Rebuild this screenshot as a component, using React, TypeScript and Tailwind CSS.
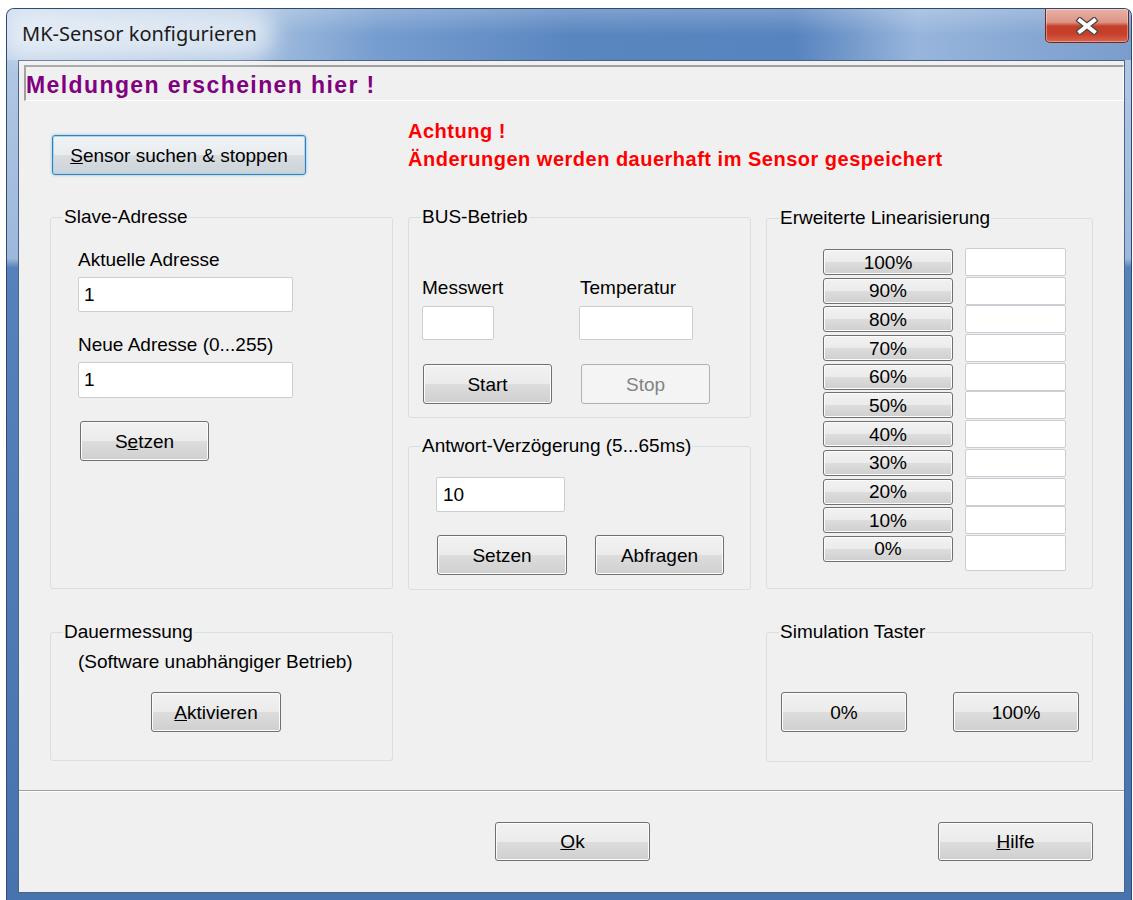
import type { ReactNode } from "react";

type ButtonProps = {
  children: ReactNode;
  className?: string;
  disabled?: boolean;
  focused?: boolean;
};

// Classic Win7 push button with the split gradient face
function WinButton({ children, className = "", disabled = false, focused = false }: ButtonProps) {
  let look =
    "border-[#707070] bg-[linear-gradient(180deg,#f2f2f2_0%,#ebebeb_50%,#dddddd_50%,#cfcfcf_100%)] shadow-[inset_0_0_0_1px_#fcfcfc] text-black";
  if (focused) {
    look =
      "border-[#3c7fb1] bg-[linear-gradient(180deg,#f1f4f6_0%,#e8ecef_50%,#d8dee2_50%,#ccd3d8_100%)] shadow-[inset_0_0_0_1px_#a6d6f1,0_0_3px_#7fbce6] text-black";
  }
  if (disabled) {
    look = "border-[#adb2b5] bg-[#f4f4f4] text-[#838383]";
  }
  return (
    <button
      type="button"
      disabled={disabled}
      className={`flex shrink-0 items-center justify-center rounded-[3px] border leading-none ${look} ${className}`}
    >
      {children}
    </button>
  );
}

function TextField({ value = "", className = "" }: { value?: string; className?: string }) {
  return (
    <input
      type="text"
      defaultValue={value}
      className={`block shrink-0 rounded-[2px] border border-[#c9ced4] bg-white pl-[5px] text-[19px] text-black outline-none ${className}`}
    />
  );
}

// Group frame; the caption sits on the top edge
function GroupBox({
  title,
  className = "",
  children,
}: {
  title: string;
  className?: string;
  children?: ReactNode;
}) {
  return (
    <div className={`relative shrink-0 rounded-[3px] border border-[#d5dfe5] pt-[9px] ${className}`}>
      <span className="absolute -top-[11px] left-[12px] bg-[#f0f0f0] px-[1px] leading-[20px] whitespace-nowrap">
        {title}
      </span>
      {children}
    </div>
  );
}

function CloseButton() {
  return (
    <div className="mr-[2px] flex h-[34px] w-[84px] items-center justify-center rounded-b-[5px] border border-t-0 border-[#6e2a20] bg-[linear-gradient(180deg,#e9b0a6_0%,#dc9486_40%,#c4402b_52%,#c53f2a_75%,#d9644d_100%)] shadow-[inset_0_0_0_1px_rgba(255,255,255,0.35)]">
      <svg width="24" height="18" viewBox="0 0 24 18">
        <path d="M5 3.5 L19 14.5 M19 3.5 L5 14.5" stroke="#4a4a4a" strokeWidth="6.5" strokeLinecap="square" />
        <path d="M5 3.5 L19 14.5 M19 3.5 L5 14.5" stroke="#ffffff" strokeWidth="4" strokeLinecap="square" />
      </svg>
    </div>
  );
}

const STEPS = ["100%", "90%", "80%", "70%", "60%", "50%", "40%", "30%", "20%", "10%", "0%"];

export default function App() {
  return (
    <div className="h-[900px] w-[1133px] overflow-hidden bg-white pl-[6px] pt-[8px] font-['Liberation_Sans',Arial,sans-serif] text-[19px] text-black">
      <div className="flex h-[892px] w-[1126px] flex-col overflow-hidden rounded-t-[8px] border-x border-t border-[#2f4a6e] bg-[linear-gradient(180deg,#b6cbe6_0%,#9db8dc_28%,#5682bb_29%,#4774ae_100%)]">
        {/* title bar */}
        <div className="flex h-[51px] shrink-0 items-start bg-[linear-gradient(180deg,rgba(255,255,255,0.22)_0%,rgba(255,255,255,0)_50%),linear-gradient(90deg,#c3d5ea_0%,#aec6e2_20%,#769dcf_33%,#5a86c0_50%,#5783be_70%,#98b6dc_81%,#88a9d4_90%,#7b9dcc_100%)]">
          <div className="flex h-full items-center pl-[15px]">
            <span className="relative">
              <span className="absolute -inset-x-[18px] -inset-y-[8px] rounded-full bg-white/55 blur-[10px]" />
              <span className="relative font-['Noto_Sans',sans-serif] text-[20px] text-[#1b1b1b]">
                MK-Sensor konfigurieren
              </span>
            </span>
          </div>
          <div className="flex-1" />
          <CloseButton />
        </div>

        <div className="flex h-[833px] shrink-0">
          <div className="w-[11px] shrink-0" />
          {/* client area */}
          <div className="flex w-[1107px] shrink-0 flex-col border border-[#4d6482] bg-[#f0f0f0]">
            {/* status line */}
            <div className="ml-[5px] mt-[4px] h-[36px] shrink-0 border-b border-l-2 border-r border-t-2 border-b-white border-l-[#a0a0a0] border-r-white border-t-[#a0a0a0] pt-[3px] text-[23px] font-bold leading-[30px] tracking-[1.4px] text-[#800080]">
              Meldungen erscheinen hier !
            </div>

            <div className="pl-[31px]">
              <div className="flex h-[116px]">
                <div className="w-[358px] shrink-0 pl-[2px] pt-[34px]">
                  <WinButton focused className="h-[40px] w-[254px]">
                    <span>
                      <u>S</u>ensor suchen &amp; stoppen
                    </span>
                  </WinButton>
                </div>
                <div className="pt-[16px] text-[20px] font-bold leading-[28px] tracking-[0.5px] text-[#ff0000]">
                  <div>Achtung !</div>
                  <div>Änderungen werden dauerhaft im Sensor gespeichert</div>
                </div>
              </div>

              <div className="flex items-start gap-[15px]">
                <GroupBox title="Slave-Adresse" className="h-[372px] w-[343px] pl-[27px]">
                  <div className="mt-[22px] leading-[22px]">Aktuelle Adresse</div>
                  <TextField value="1" className="mt-[6px] h-[35px] w-[215px]" />
                  <div className="mt-[22px] leading-[22px]">Neue Adresse (0...255)</div>
                  <TextField value="1" className="mt-[6px] h-[36px] w-[215px]" />
                  <WinButton className="ml-[2px] mt-[23px] h-[40px] w-[129px]">
                    <span>
                      S<u>e</u>tzen
                    </span>
                  </WinButton>
                </GroupBox>

                <div className="flex flex-col">
                  <GroupBox title="BUS-Betrieb" className="h-[201px] w-[343px] pl-[13px]">
                    <div className="mt-[50px] flex">
                      <div className="w-[157px]">
                        <div className="leading-[22px]">Messwert</div>
                        <TextField className="mt-[7px] h-[34px] w-[72px]" />
                        <WinButton className="ml-[1px] mt-[24px] h-[40px] w-[129px]">Start</WinButton>
                      </div>
                      <div>
                        <div className="pl-[1px] leading-[22px]">Temperatur</div>
                        <TextField className="mt-[7px] h-[34px] w-[114px]" />
                        <WinButton disabled className="ml-[2px] mt-[24px] h-[40px] w-[129px]">
                          Stop
                        </WinButton>
                      </div>
                    </div>
                  </GroupBox>

                  <GroupBox title="Antwort-Verzögerung (5...65ms)" className="mt-[28px] h-[144px] w-[343px] pl-[27px]">
                    <TextField value="10" className="mt-[21px] h-[35px] w-[129px] pl-[6px]" />
                    <div className="mt-[23px] flex gap-[28px] pl-[1px]">
                      <WinButton className="h-[40px] w-[130px]">Setzen</WinButton>
                      <WinButton className="h-[40px] w-[129px]">Abfragen</WinButton>
                    </div>
                  </GroupBox>
                </div>

                <GroupBox title="Erweiterte Linearisierung" className="mt-[1px] h-[371px] w-[327px] pl-[56px]">
                  <div className="mt-[20px]">
                    {STEPS.map((step, i) => (
                      <div key={step} className="flex h-[28.7px] items-start">
                        <WinButton className="mt-[1px] h-[26px] w-[130px]">{step}</WinButton>
                        <TextField
                          className={i === STEPS.length - 1 ? "ml-[12px] h-[36px] w-[101px]" : "ml-[12px] h-[28px] w-[101px]"}
                        />
                      </div>
                    ))}
                  </div>
                </GroupBox>
              </div>

              <div className="mt-[42px] flex items-start gap-[15px]">
                <GroupBox title="Dauermessung" className="h-[129px] w-[343px] pl-[27px]">
                  <div className="mt-[9px] leading-[22px]">(Software unabhängiger Betrieb)</div>
                  <WinButton className="ml-[73px] mt-[19px] h-[40px] w-[130px]">
                    <span>
                      <u>A</u>ktivieren
                    </span>
                  </WinButton>
                </GroupBox>
                <div className="w-[343px] shrink-0" />
                <GroupBox title="Simulation Taster" className="h-[130px] w-[327px] pl-[14px]">
                  <div className="mt-[50px] flex gap-[46px]">
                    <WinButton className="h-[40px] w-[126px]">0%</WinButton>
                    <WinButton className="h-[40px] w-[126px]">100%</WinButton>
                  </div>
                </GroupBox>
              </div>
            </div>

            <div className="mt-[28px] h-[2px] shrink-0 border-b border-t border-b-white border-t-[#a0a0a0]" />

            <div className="mt-[30px] flex pl-[476px]">
              <WinButton className="h-[39px] w-[155px]">
                <span>
                  <u>O</u>k
                </span>
              </WinButton>
              <WinButton className="ml-[288px] h-[39px] w-[155px]">
                <span>
                  <u>H</u>ilfe
                </span>
              </WinButton>
            </div>
          </div>
        </div>
      </div>
    </div>
  );
}
